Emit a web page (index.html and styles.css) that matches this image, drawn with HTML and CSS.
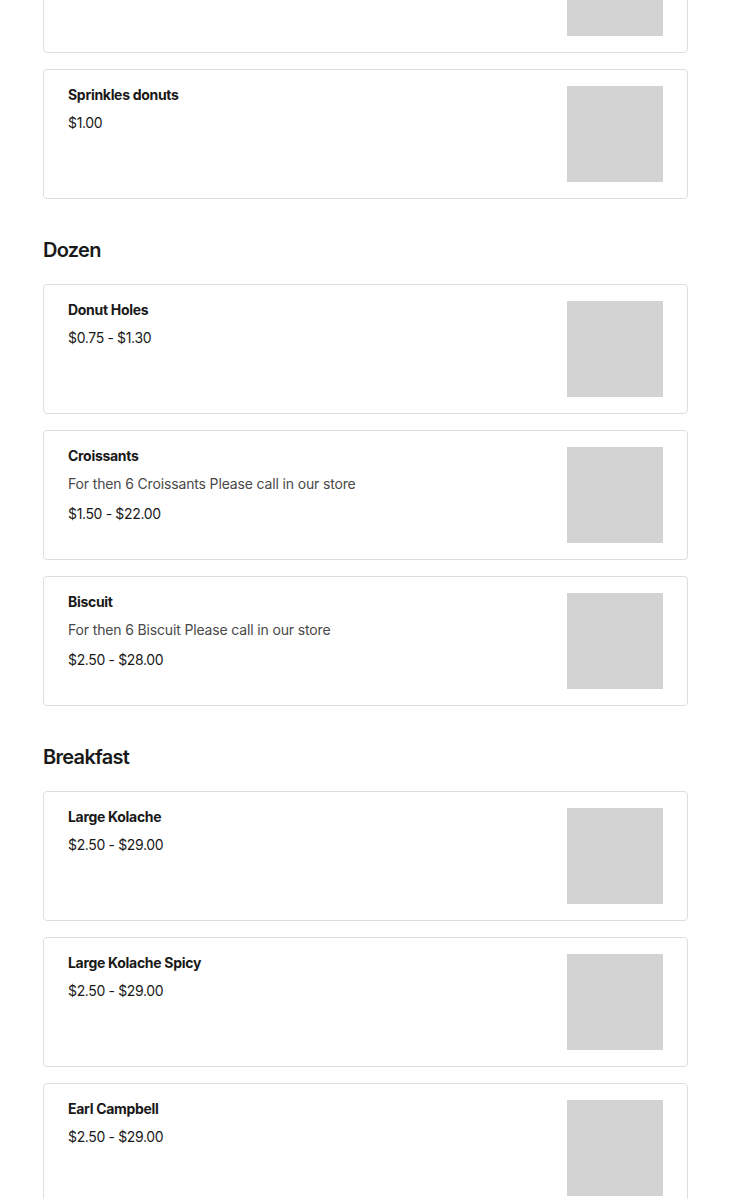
FILE: index.html
```html
<!DOCTYPE html>
<html lang="en">
<head>
<meta charset="utf-8">
<title>Menu</title>
<link rel="stylesheet" href="styles.css">
</head>
<body>
<main class="menu">
  <section class="category category-first">
    <div class="items">
      <article class="item">
        <div class="item-text"></div>
        <div class="item-photo"></div>
      </article>
      <article class="item">
        <div class="item-text">
          <h3 class="item-name">Sprinkles donuts</h3>
          <p class="item-price">$1.00</p>
        </div>
        <div class="item-photo"></div>
      </article>
    </div>
  </section>

  <section class="category">
    <h2 class="category-title">Dozen</h2>
    <div class="items">
      <article class="item">
        <div class="item-text">
          <h3 class="item-name">Donut Holes</h3>
          <p class="item-price">$0.75 - $1.30</p>
        </div>
        <div class="item-photo"></div>
      </article>
      <article class="item">
        <div class="item-text">
          <h3 class="item-name">Croissants</h3>
          <p class="item-desc">For then 6 Croissants Please call in our store</p>
          <p class="item-price">$1.50 - $22.00</p>
        </div>
        <div class="item-photo"></div>
      </article>
      <article class="item">
        <div class="item-text">
          <h3 class="item-name">Biscuit</h3>
          <p class="item-desc">For then 6 Biscuit Please call in our store</p>
          <p class="item-price">$2.50 - $28.00</p>
        </div>
        <div class="item-photo"></div>
      </article>
    </div>
  </section>

  <section class="category">
    <h2 class="category-title">Breakfast</h2>
    <div class="items">
      <article class="item">
        <div class="item-text">
          <h3 class="item-name">Large Kolache</h3>
          <p class="item-price">$2.50 - $29.00</p>
        </div>
        <div class="item-photo"></div>
      </article>
      <article class="item">
        <div class="item-text">
          <h3 class="item-name">Large Kolache Spicy</h3>
          <p class="item-price">$2.50 - $29.00</p>
        </div>
        <div class="item-photo"></div>
      </article>
      <article class="item">
        <div class="item-text">
          <h3 class="item-name">Earl Campbell</h3>
          <p class="item-price">$2.50 - $29.00</p>
        </div>
        <div class="item-photo"></div>
      </article>
    </div>
  </section>
</main>
</body>
</html>
```

FILE: styles.css
```css
html, body {
  margin: 0;
  padding: 0;
  height: 100%;
  overflow: hidden;
  background: #ffffff;
}

body {
  font-family: "Inter", "Liberation Sans", sans-serif;
  color: #191919;
}

.menu {
  padding: 0 42px 0 43px;
  margin-top: -77px;
}

.category {
  margin-top: 39px;
}

.category-first {
  margin-top: 0;
}

.category-title {
  margin: 0 0 22px 0;
  font-size: 20px;
  line-height: 24px;
  font-weight: 600;
  letter-spacing: -0.7px;
  color: #191919;
}

.items {
  display: flex;
  flex-direction: column;
  gap: 16px;
}

.item {
  display: flex;
  justify-content: space-between;
  align-items: flex-start;
  border: 1px solid #dedede;
  border-radius: 4px;
  padding: 16px 24px;
  background: #fff;
}

.item-text {
  display: flex;
  flex-direction: column;
  gap: 10px;
  padding-top: 1px;
}

.item-name {
  margin: 0;
  font-size: 14px;
  line-height: 16px;
  font-weight: 700;
  letter-spacing: -0.3px;
  color: #191919;
}

.item-desc {
  margin: 0;
  font-size: 14px;
  line-height: 20px;
  letter-spacing: -0.15px;
  color: #494949;
}

.item-price {
  margin: 0;
  font-size: 14px;
  line-height: 20px;
  letter-spacing: -0.35px;
  color: #191919;
}

.item-photo {
  width: 96px;
  height: 96px;
  flex: none;
  background: #d3d3d3;
}
```
